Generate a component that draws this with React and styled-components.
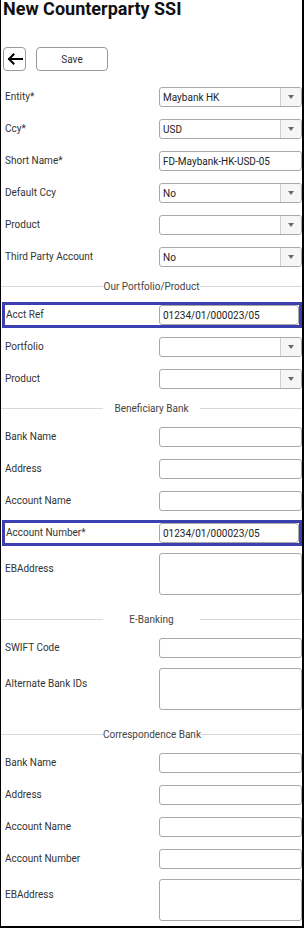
import React from "react";
import styled, { createGlobalStyle } from "styled-components";

const GlobalStyle = createGlobalStyle`
  html, body {
    margin: 0;
    padding: 0;
    background: #fff;
    overflow: hidden;
  }
  body {
    font-family: Roboto, "Liberation Sans", Arial, sans-serif;
  }
`;

const Frame = styled.div`
  width: 304px;
  height: 928px;
  box-sizing: border-box;
  border-left: 1px solid #000;
  border-right: 2px solid #000;
  border-bottom: 2px solid #000;
  overflow: hidden;
  background: #fff;
`;

const Title = styled.h1`
  margin: 0;
  padding-left: 2px;
  font-family: Roboto, "Liberation Sans", sans-serif;
  font-size: 18px;
  line-height: 18px;
  font-weight: 700;
  color: #111;
  white-space: nowrap;
`;

const Toolbar = styled.div`
  display: flex;
  gap: 10px;
  margin-top: 29px;
  margin-bottom: 10px;
  padding-left: 2px;
`;

const ToolButton = styled.button`
  box-sizing: border-box;
  width: ${(p) => p.$width}px;
  height: 24px;
  padding: 0;
  display: flex;
  align-items: center;
  justify-content: center;
  border: 1px solid #9a9a9a;
  border-radius: 4px;
  background: #fff;
  font-family: Roboto, sans-serif;
  font-size: 10px;
  color: #333;
`;

const Row = styled.div`
  display: grid;
  grid-template-columns: ${(p) => (p.$highlight ? "154px 140px" : "158px 143px")};
  align-items: ${(p) => (p.$tall ? "start" : "center")};
  box-sizing: border-box;
  height: ${(p) => (p.$highlight ? 26 : p.$tall ? 57 : 32)}px;
  padding-top: ${(p) => (p.$tall ? 4 : 0)}px;
  margin: ${(p) => (p.$highlight ? "3px 0 3px 1px" : "0")};
  border: ${(p) => (p.$highlight ? "3px solid #3b3fb0" : "none")};
`;

const Label = styled.div`
  padding-left: ${(p) => (p.$highlight ? 1 : 4)}px;
  margin-top: ${(p) => (p.$tall ? 6 : 0)}px;
  font-size: 10px;
  line-height: 20px;
  color: #333;
  white-space: nowrap;
`;

const Box = styled.div`
  box-sizing: border-box;
  height: ${(p) => (p.$tall ? 42 : 20)}px;
  display: flex;
  align-items: center;
  border: 1px solid #a8a8a8;
  border-radius: 3px;
  background: #fff;
  overflow: hidden;
`;

const Value = styled.span`
  flex: 1;
  padding-left: 3px;
  font-size: 10px;
  color: #222;
  white-space: nowrap;
`;

const Caret = styled.span`
  width: 20px;
  align-self: stretch;
  display: flex;
  align-items: center;
  justify-content: center;
  border-left: 1px solid #cfcfcf;
  background: #f6f6f6;

  &::after {
    content: "";
    border-left: 3px solid transparent;
    border-right: 3px solid transparent;
    border-top: 4px solid #6a6a6a;
  }
`;

const Section = styled.div`
  display: flex;
  align-items: center;
  height: 26px;
`;

const Rule = styled.div`
  flex: 1;
  height: 1px;
  background: #d8d8d8;
`;

const Caption = styled.div`
  width: 97px;
  text-align: center;
  font-size: 10px;
  color: #444;
  white-space: nowrap;
`;

function BackArrow() {
  return (
    <svg width="16" height="12" viewBox="0 0 16 12">
      <path d="M15 6H2M6.5 1.5L2 6l4.5 4.5" fill="none" stroke="#000" strokeWidth="2" strokeLinecap="square" />
    </svg>
  );
}

function Field({ label, value = "", type = "text", highlight }) {
  const tall = type === "area";
  return (
    <Row $highlight={highlight} $tall={tall}>
      <Label $highlight={highlight} $tall={tall}>{label}</Label>
      <Box $tall={tall}>
        {!tall && <Value>{value}</Value>}
        {type === "select" && <Caret />}
      </Box>
    </Row>
  );
}

function SectionHeader({ children }) {
  return (
    <Section>
      <Rule />
      <Caption>{children}</Caption>
      <Rule />
    </Section>
  );
}

export default function App() {
  return (
    <Frame>
      <GlobalStyle />
      <Title>New Counterparty SSI</Title>
      <Toolbar>
        <ToolButton $width={23}>
          <BackArrow />
        </ToolButton>
        <ToolButton $width={72}>Save</ToolButton>
      </Toolbar>

      <Field label="Entity*" value="Maybank HK" type="select" />
      <Field label="Ccy*" value="USD" type="select" />
      <Field label="Short Name*" value="FD-Maybank-HK-USD-05" />
      <Field label="Default Ccy" value="No" type="select" />
      <Field label="Product" type="select" />
      <Field label="Third Party Account" value="No" type="select" />

      <SectionHeader>Our Portfolio/Product</SectionHeader>
      <Field label="Acct Ref" value="01234/01/000023/05" highlight />
      <Field label="Portfolio" type="select" />
      <Field label="Product" type="select" />

      <SectionHeader>Beneficiary Bank</SectionHeader>
      <Field label="Bank Name" />
      <Field label="Address" />
      <Field label="Account Name" />
      <Field label="Account Number*" value="01234/01/000023/05" highlight />
      <Field label="EBAddress" type="area" />

      <SectionHeader>E-Banking</SectionHeader>
      <Field label="SWIFT Code" />
      <Field label="Alternate Bank IDs" type="area" />

      <SectionHeader>Correspondence Bank</SectionHeader>
      <Field label="Bank Name" />
      <Field label="Address" />
      <Field label="Account Name" />
      <Field label="Account Number" />
      <Field label="EBAddress" type="area" />
    </Frame>
  );
}
